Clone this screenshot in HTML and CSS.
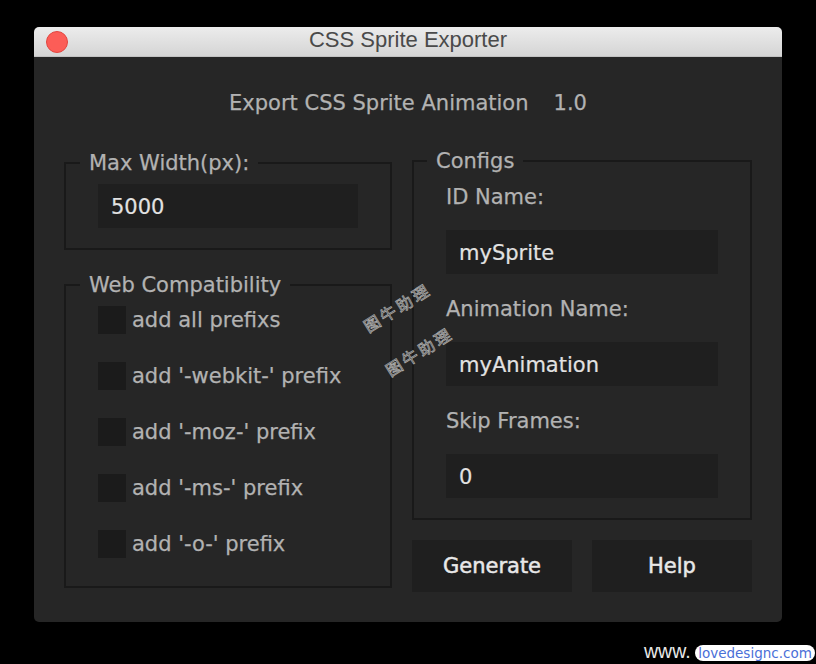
FILE: index.html
```html
<!DOCTYPE html>
<html>
<head>
<meta charset="utf-8">
<title>CSS Sprite Exporter</title>
<link rel="stylesheet" href="styles.css">
</head>
<body>
<div class="window">
  <div class="titlebar">
    <span class="close"></span>
    <span class="title">CSS Sprite Exporter</span>
  </div>
  <div class="content">
    <div class="header">Export CSS Sprite Animation<span class="version">1.0</span></div>
    <div class="columns">
      <div class="col-left">
        <fieldset class="group">
          <legend class="legend">Max Width(px):</legend>
          <div class="group-body group-body--width">
            <div class="input input--narrow">5000</div>
          </div>
        </fieldset>
        <fieldset class="group group--compat">
          <legend class="legend">Web Compatibility</legend>
          <div class="group-body group-body--compat">
            <div class="check-row"><span class="checkbox"></span><span class="check-label">add all prefixs</span></div>
            <div class="check-row"><span class="checkbox"></span><span class="check-label">add '-webkit-' prefix</span></div>
            <div class="check-row"><span class="checkbox"></span><span class="check-label">add '-moz-' prefix</span></div>
            <div class="check-row"><span class="checkbox"></span><span class="check-label">add '-ms-' prefix</span></div>
            <div class="check-row"><span class="checkbox"></span><span class="check-label">add '-o-' prefix</span></div>
          </div>
        </fieldset>
      </div>
      <div class="col-right">
        <fieldset class="group">
          <legend class="legend legend--configs">Configs</legend>
          <div class="group-body group-body--configs">
            <div class="field-label">ID Name:</div>
            <div class="input">mySprite</div>
            <div class="field-label">Animation Name:</div>
            <div class="input">myAnimation</div>
            <div class="field-label">Skip Frames:</div>
            <div class="input">0</div>
          </div>
        </fieldset>
        <div class="buttons">
          <div class="button">Generate</div>
          <div class="button">Help</div>
        </div>
      </div>
    </div>
  </div>
</div>
<span class="wm wm--one">图牛助理</span>
<span class="wm wm--two">图牛助理</span>
<div class="site-mark"><span class="site-www">www.</span><span class="site-badge">lovedesignc.com</span></div>
</body>
</html>
```
FILE: styles.css
```css
html, body {
  margin: 0;
  background: #000;
}
body {
  padding: 27px 0 0 34px;
  height: 664px;
  box-sizing: border-box;
  overflow: hidden;
  font-family: "DejaVu Sans", "Noto Sans", sans-serif;
}
.window {
  width: 748px;
}
.titlebar {
  position: relative;
  height: 30px;
  box-sizing: border-box;
  padding-bottom: 5px;
  line-height: 25px;
  text-align: center;
  background: linear-gradient(#ececec, #d4d4d4);
  border-radius: 5px 5px 0 0;
  box-shadow: inset 0 -1px 0 #c2c2c2;
}
.title {
  font-family: "Liberation Sans", Arial, sans-serif;
  font-size: 22px;
  color: #4a4a4a;
}
.close {
  position: absolute;
  left: 12px;
  top: 4px;
  width: 22px;
  height: 22px;
  box-sizing: border-box;
  border-radius: 50%;
  background: #fc5d57;
  border: 1px solid #e2463f;
}
.content {
  height: 565px;
  box-sizing: border-box;
  padding: 34px 30px 0;
  background: #262626;
  border-radius: 0 0 5px 5px;
}
.header {
  font-size: 21px;
  line-height: 24px;
  color: #b2b2b2;
  text-align: center;
  -webkit-text-stroke: 0.25px #b2b2b2;
}
.version {
  margin-left: 25px;
}
.columns {
  display: grid;
  grid-template-columns: 328px 340px;
  column-gap: 20px;
  margin-top: 34px;
  align-items: start;
}
.col-left {
  padding-top: 2px;
}
.group {
  margin: 0;
  padding: 0;
  min-width: 0;
  border: 2px solid #191919;
}
.group--compat {
  margin-top: 23px;
}
.legend {
  margin-left: 14px;
  padding: 0 9px;
  font-size: 21px;
  line-height: 24px;
  color: #b2b2b2;
  -webkit-text-stroke: 0.25px #b2b2b2;
}
.legend--configs {
  margin-left: 13px;
}
.group-body--width {
  padding: 9px 30px 20px 32px;
}
.group-body--compat {
  padding: 9px 20px 28px 32px;
  display: flex;
  flex-direction: column;
  gap: 28px;
}
.group-body--configs {
  padding: 0 32px 20px 32px;
}
.input {
  height: 44px;
  box-sizing: border-box;
  padding: 1px 0 0 13px;
  line-height: 44px;
  background: #1f1f1f;
  font-size: 21px;
  color: #e2e2e2;
  -webkit-text-stroke: 0.2px #e2e2e2;
}
.input--narrow {
  width: 260px;
}
.field-label {
  margin-top: 23px;
  font-size: 21px;
  line-height: 24px;
  color: #b2b2b2;
  -webkit-text-stroke: 0.25px #b2b2b2;
}
.field-label:first-child {
  margin-top: 12px;
}
.field-label + .input {
  margin-top: 21px;
}
.check-row {
  display: flex;
  align-items: center;
  gap: 6px;
  height: 28px;
}
.checkbox {
  width: 28px;
  height: 28px;
  flex: none;
  background: #1b1b1b;
}
.check-label {
  font-size: 21px;
  line-height: 24px;
  color: #b2b2b2;
  white-space: nowrap;
  -webkit-text-stroke: 0.25px #b2b2b2;
}
.buttons {
  display: grid;
  grid-template-columns: 160px 160px;
  column-gap: 20px;
  margin-top: 20px;
}
.button {
  height: 52px;
  line-height: 52px;
  text-align: center;
  background: #1f1f1f;
  font-size: 21px;
  color: #e8e8e8;
  -webkit-text-stroke: 0.5px #e8e8e8;
}
.wm {
  position: absolute;
  font-family: "Noto Sans CJK SC", sans-serif;
  font-size: 16px;
  line-height: 20px;
  letter-spacing: 3px;
  color: rgba(30, 30, 30, 0.7);
  -webkit-text-stroke: 0.8px #a8a8a8;
  transform: rotate(-32deg);
  white-space: nowrap;
}
.wm--one {
  left: 359px;
  top: 297px;
}
.wm--two {
  left: 381px;
  top: 341px;
}
.site-mark {
  position: absolute;
  left: 644px;
  top: 641px;
  height: 20px;
  white-space: nowrap;
}
.site-www {
  font-family: "Liberation Sans", Arial, sans-serif;
  font-size: 19.5px;
  line-height: 20px;
  color: #e8e8e8;
}
.site-badge {
  position: absolute;
  left: 51px;
  top: 4px;
  width: 120px;
  height: 16px;
  border-radius: 8px;
  background: #fff;
  color: #4a6fd8;
  font-family: "DejaVu Sans", sans-serif;
  font-size: 13.5px;
  line-height: 16px;
  text-align: center;
}
```
